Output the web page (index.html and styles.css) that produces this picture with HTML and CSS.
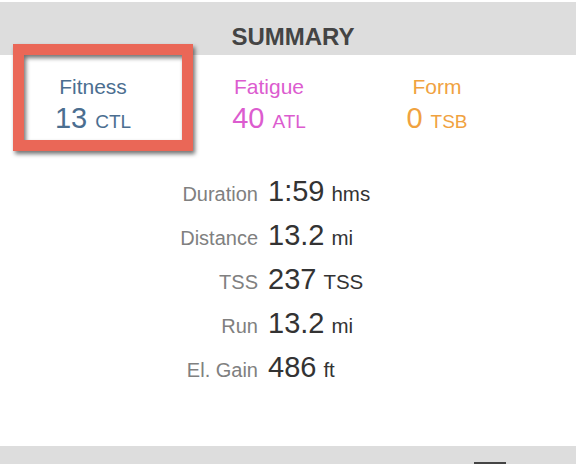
FILE: index.html
```html
<!DOCTYPE html>
<html>
<head>
<meta charset="utf-8">
<link rel="stylesheet" href="styles.css">
</head>
<body>
<div class="panel">
  <div class="header">SUMMARY</div>
  <div class="metrics">
    <div class="metric fitness col1">
      <div class="m-label">Fitness</div>
      <div class="m-value">13<span class="m-unit">CTL</span></div>
    </div>
    <div class="metric fatigue col2">
      <div class="m-label">Fatigue</div>
      <div class="m-value">40<span class="m-unit">ATL</span></div>
    </div>
    <div class="metric form col3">
      <div class="m-label">Form</div>
      <div class="m-value">0<span class="m-unit">TSB</span></div>
    </div>
  </div>
  <div class="stats">
    <div class="s-label">Duration</div><div class="s-value">1:59<span class="s-unit">hms</span></div>
    <div class="s-label">Distance</div><div class="s-value">13.2<span class="s-unit">mi</span></div>
    <div class="s-label">TSS</div><div class="s-value">237<span class="s-unit">TSS</span></div>
    <div class="s-label">Run</div><div class="s-value">13.2<span class="s-unit">mi</span></div>
    <div class="s-label">El. Gain</div><div class="s-value">486<span class="s-unit">ft</span></div>
  </div>
  <div class="footer"><div class="footer-btn"></div></div>
  <div class="highlight"></div>
</div>
</body>
</html>
```
FILE: styles.css
```css
html, body {
  margin: 0;
  padding: 0;
  background: #ffffff;
}
body {
  font-family: "Liberation Sans", Arial, Helvetica, sans-serif;
  width: 578px;
  height: 464px;
  overflow: hidden;
}
.panel {
  position: relative;
  margin-top: 2px;
  width: 576px;
  height: 462px;
  display: flex;
  flex-direction: column;
}
.header {
  background: #dddddd;
  height: 53px;
  box-sizing: border-box;
  padding-top: 21px;
  font-size: 24px;
  line-height: 27px;
  font-weight: bold;
  color: #444444;
  text-align: center;
  padding-left: 10px;
}
.metrics {
  display: flex;
  padding-top: 20px;
  padding-left: 5px;
}
.metric {
  text-align: center;
}
.col1 { width: 176px; }
.col2 { width: 176px; }
.col3 { width: 160px; }
.m-label {
  font-size: 21px;
  line-height: 24px;
}
.m-value {
  font-size: 29px;
  line-height: 30px;
  margin-top: 4px;
}
.m-unit {
  font-size: 19px;
  margin-left: 8px;
}
.fitness { color: #4b6e90; }
.fatigue { color: #dc5ccf; }
.form { color: #f0a23f; }
.stats {
  display: grid;
  grid-template-columns: 258px 1fr;
  column-gap: 10px;
  grid-auto-rows: 44px;
  align-items: baseline;
  margin-top: 32px;
}
.s-label {
  text-align: right;
  font-size: 20px;
  line-height: 44px;
  color: #808080;
}
.s-value {
  font-size: 29px;
  line-height: 44px;
  color: #333333;
}
.s-unit {
  font-size: 20.5px;
  margin-left: 7px;
}
.footer {
  margin-top: auto;
  height: 18px;
  background: #dddddd;
  display: flex;
  justify-content: flex-end;
  align-items: flex-end;
}
.footer-btn {
  width: 32px;
  height: 2px;
  background: #444444;
  margin-right: 70px;
}
.highlight {
  position: absolute;
  left: 13px;
  top: 42px;
  width: 180px;
  height: 107px;
  box-sizing: border-box;
  border: 11px solid #ea6757;
  filter: drop-shadow(2px 3px 2px rgba(0, 0, 0, 0.55));
}
```
